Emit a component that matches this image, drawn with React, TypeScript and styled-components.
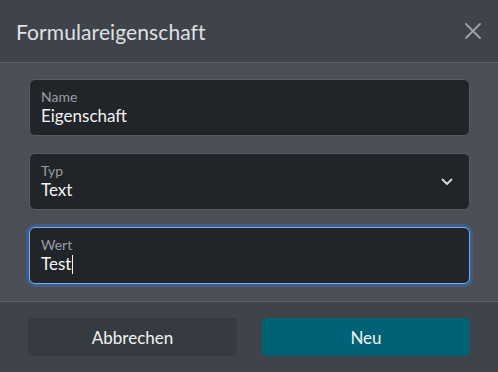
import React from 'react'
import styled, { createGlobalStyle, css } from 'styled-components'

const GlobalStyle = createGlobalStyle`
  html, body {
    margin: 0;
    padding: 0;
    background: #4a4e55;
  }
  * {
    box-sizing: border-box;
  }
`

const Dialog = styled.div`
  width: 498px;
  height: 372px;
  display: flex;
  flex-direction: column;
  background: #4a4e55;
  font-family: Lato, 'Open Sans', sans-serif;
  color: #e9eaec;
`

const Header = styled.div`
  height: 63px;
  display: flex;
  align-items: center;
  justify-content: space-between;
  padding: 0 14px 0 16px;
  background: #3f434a;
  border-bottom: 1px solid #5b5f66;
`

const Title = styled.h1`
  margin: 0;
  font-size: 21px;
  font-weight: 400;
  letter-spacing: 0.1px;
  color: #dfe1e4;
`

const CloseButton = styled.button`
  width: 22px;
  height: 22px;
  padding: 0;
  border: none;
  background: transparent;
  display: flex;
  align-items: center;
  justify-content: center;
  cursor: pointer;
`

const Body = styled.div`
  flex: 1;
  display: flex;
  flex-direction: column;
  gap: 17px;
  padding: 16px 28px 0 29px;
`

const Field = styled.label<{ $focused?: boolean }>`
  position: relative;
  height: 57px;
  display: flex;
  flex-direction: column;
  justify-content: center;
  padding: 0 11px;
  border-radius: 6px;
  background: #212428;
  border: 1px solid #575b62;
  ${({ $focused }) =>
    $focused &&
    css`
      border-color: #7eaaeb;
      box-shadow: 0 0 0 3px #3e5d8a;
    `}
`

const Label = styled.span`
  font-size: 14px;
  line-height: 17px;
  margin-top: -2px;
  color: #999da3;
`

const Value = styled.span`
  font-size: 17px;
  line-height: 21px;
  color: #f2f3f4;
`

const Caret = styled.span`
  display: inline-block;
  width: 1px;
  height: 19px;
  margin-left: 1px;
  vertical-align: -4px;
  background: #f2f3f4;
`

const Chevron = styled.svg`
  position: absolute;
  right: 16px;
  top: 50%;
  margin-top: -4px;
`

const Footer = styled.div`
  height: 71px;
  display: grid;
  grid-template-columns: 209px 208px;
  justify-content: space-between;
  align-items: start;
  padding: 16px 28px 0 28px;
  background: #3f434a;
  border-top: 1px solid #5b5f66;
`

const Button = styled.button<{ $primary?: boolean }>`
  height: 38px;
  border: none;
  border-radius: 5px;
  font-family: Lato, 'Open Sans', sans-serif;
  font-size: 17px;
  color: #f2f3f4;
  background: ${({ $primary }) => ($primary ? '#016175' : '#363a41')};
  cursor: pointer;
`

export default function App() {
  return (
    <>
      <GlobalStyle />
      <Dialog>
        <Header>
          <Title>Formulareigenschaft</Title>
          <CloseButton aria-label="Schließen">
            <svg width="18" height="18" viewBox="0 0 18 18">
              <path d="M2 2L16 16M16 2L2 16" stroke="#a0a3a8" strokeWidth="1.8" strokeLinecap="round" />
            </svg>
          </CloseButton>
        </Header>
        <Body>
          <Field>
            <Label>Name</Label>
            <Value>Eigenschaft</Value>
          </Field>
          <Field>
            <Label>Typ</Label>
            <Value>Text</Value>
            <Chevron width="12" height="8" viewBox="0 0 12 8">
              <path d="M1.5 1.5L6 6L10.5 1.5" stroke="#d6d8db" strokeWidth="1.8" fill="none" strokeLinecap="round" strokeLinejoin="round" />
            </Chevron>
          </Field>
          <Field $focused>
            <Label>Wert</Label>
            <Value>
              Test
              <Caret />
            </Value>
          </Field>
        </Body>
        <Footer>
          <Button>Abbrechen</Button>
          <Button $primary>Neu</Button>
        </Footer>
      </Dialog>
    </>
  )
}
